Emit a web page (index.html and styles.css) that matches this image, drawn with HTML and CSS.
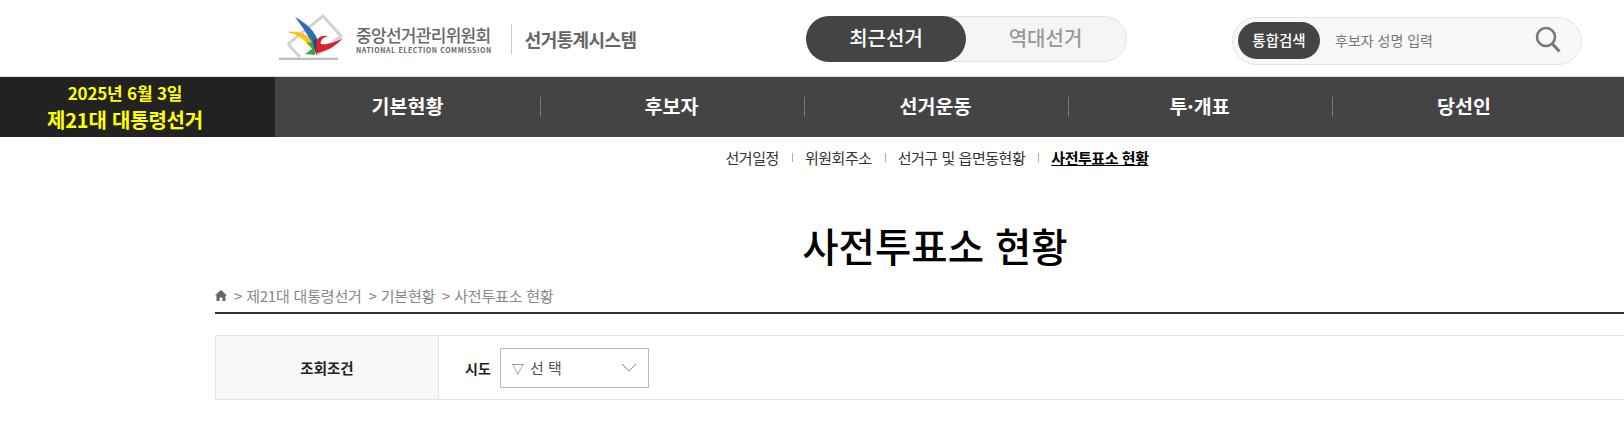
FILE: index.html
```html
<!DOCTYPE html>
<html lang="ko">
<head>
    <meta charset="UTF-8">
    <meta name="viewport" content="width=device-width, initial-scale=1.0">
    <title>사전투표소 현황</title>
    <link rel="stylesheet" href="styles.css">
</head>
<body>
    <header class="top">
        <div class="logo">
            <svg class="logo-mark" width="64" height="46" viewBox="0 0 64 46">
                <path d="M9 30 L44 2 L62 22 L38 41" fill="none" stroke="#d2d2d2" stroke-width="3"/>
                <path d="M9 30 L21 43" fill="none" stroke="#d2d2d2" stroke-width="3"/>
                <path d="M0 45 H59" stroke="#bdbdbd" stroke-width="2.5"/>
                <path d="M16 3 C27 9 36 17 39 27 L33 31 C29 20 22 11 16 3Z" fill="#2a6fb4"/>
                <path d="M8 18 C19 16 29 20 33 28 L30 33 C26 25 17 20 8 18Z" fill="#f6c51c"/>
                <path d="M28 28 L34 29 L37 36 L36 41 L26 40 L33 35Z" fill="#3ba648"/>
                <path d="M34 27 C35 36 38 39 37 41 L40 37 C42 32 40 27 37 25Z" fill="#243f8c"/>
                <path d="M37 39 C47 38 57 32 64 24 C55 29 47 31 42 30 C41 27 43 24 49 22 C42 21 37 24 37 30Z" fill="#d8232e"/>
            </svg>
            <div class="logo-name">
                <strong>중앙선거관리위원회</strong>
                <span>NATIONAL ELECTION COMMISSION</span>
            </div>
            <div class="logo-system">선거통계시스템</div>
        </div>
        <div class="toggle">
            <a class="toggle-item on">최근선거</a>
            <a class="toggle-item">역대선거</a>
        </div>
        <div class="search">
            <span class="search-btn">통합검색</span>
            <span class="search-hint">후보자 성명 입력</span>
            <svg class="search-icon" width="26" height="28" viewBox="0 0 26 28">
                <circle cx="11" cy="11" r="9" fill="none" stroke="#777" stroke-width="2.6"/>
                <path d="M17.5 18 L24.5 25.5" stroke="#777" stroke-width="3"/>
            </svg>
        </div>
    </header>

    <nav class="gnb">
        <div class="election">
            <div class="election-date">2025년 6월 3일</div>
            <div class="election-name">제21대 대통령선거</div>
        </div>
        <ul class="gnb-list">
            <li>기본현황</li>
            <li>후보자</li>
            <li>선거운동</li>
            <li>투·개표</li>
            <li>당선인</li>
        </ul>
    </nav>

    <ul class="subnav">
        <li>선거일정</li>
        <li>위원회주소</li>
        <li>선거구 및 읍면동현황</li>
        <li class="current">사전투표소 현황</li>
    </ul>

    <main class="content">
        <h1 class="page-title">사전투표소 현황</h1>
        <div class="crumb">
            <svg width="12" height="11" viewBox="0 0 12 11">
                <path d="M6 0 L12 5.5 H10.5 V11 H7.5 V7.5 H4.5 V11 H1.5 V5.5 H0Z" fill="#666"/>
            </svg>
            <span>&gt; 제21대 대통령선거</span>
            <span>&gt; 기본현황</span>
            <span>&gt; 사전투표소 현황</span>
        </div>
        <div class="filter">
            <div class="filter-head">조회조건</div>
            <div class="filter-body">
                <label class="filter-label">시도</label>
                <div class="select">
                    <span><i class="select-mark">▽</i> 선 택</span>
                    <svg width="16" height="9" viewBox="0 0 16 9">
                        <path d="M1 1 L8 8 L15 1" fill="none" stroke="#888" stroke-width="1"/>
                    </svg>
                </div>
            </div>
        </div>
    </main>
</body>
</html>
```

FILE: styles.css
```css
* {
    box-sizing: border-box;
}
html, body {
    overflow: hidden;
}
body {
    margin: 0;
    width: 1624px;
    height: 447px;
    background: #fff;
    color: #222;
    font-family: "Noto Sans CJK KR", "Noto Sans", sans-serif;
}
ul {
    list-style: none;
    margin: 0;
    padding: 0;
}

/* top */
.top {
    display: flex;
    align-items: flex-start;
    height: 77px;
    padding-left: 279px;
    border-bottom: 1px solid #ddd;
}
.logo {
    display: flex;
    align-items: center;
    width: 527px;
    height: 50px;
    margin-top: 12px;
}
.logo-mark {
    flex: none;
}
.logo-name {
    display: flex;
    flex-direction: column;
    margin: 3px 0 0 13px;
    color: #666;
}
.logo-name strong {
    font-size: 17px;
    font-weight: 500;
    line-height: 23px;
    letter-spacing: -0.7px;
}
.logo-name span {
    font-size: 7px;
    font-weight: 700;
    line-height: 9px;
    letter-spacing: 0.6px;
    white-space: nowrap;
}
.logo-system {
    height: 30px;
    margin: 3px 0 0 19px;
    padding-left: 13px;
    border-left: 1px solid #ccc;
    color: #666;
    font-size: 18px;
    font-weight: 700;
    line-height: 30px;
    letter-spacing: -0.6px;
}
.toggle {
    display: flex;
    width: 321px;
    height: 46px;
    margin-top: 16px;
    background: #f5f5f5;
    border: 1px solid #e2e2e2;
    border-radius: 23px;
}
.toggle-item {
    width: 160px;
    margin: -1px;
    color: #999;
    font-size: 20px;
    font-weight: 500;
    line-height: 44px;
    text-align: center;
}
.toggle-item.on {
    background: #444;
    color: #fff;
    border-radius: 23px;
}
.toggle-item + .toggle-item {
    padding-left: 3px;
}
.search {
    display: flex;
    align-items: center;
    width: 350px;
    height: 48px;
    margin: 17px 0 0 105px;
    padding: 0 20px 2px 5px;
    background: #f8f8f8;
    border: 1px solid #e4e4e4;
    border-radius: 24px;
}
.search-btn {
    width: 82px;
    height: 37px;
    background: #444;
    color: #fff;
    border-radius: 19px;
    font-size: 14.5px;
    font-weight: 500;
    line-height: 36px;
    text-align: center;
}
.search-hint {
    flex: 1;
    margin-left: 15px;
    color: #777;
    font-size: 14px;
}

/* main menu */
.gnb {
    display: flex;
    height: 60px;
    background: #444;
}
.election {
    width: 275px;
    padding-right: 25px;
    background: #222;
    color: #ff0;
    font-weight: 700;
    text-align: center;
}
.election-date {
    margin-top: 3px;
    font-size: 17px;
    line-height: 26px;
    letter-spacing: -0.2px;
}
.election-name {
    font-size: 20px;
    line-height: 27px;
    letter-spacing: -0.2px;
}
.gnb-list {
    display: flex;
    align-items: center;
    margin-left: 2px;
}
.gnb-list li {
    width: 264px;
    height: 20px;
    padding-right: 2px;
    border-right: 1px solid #777;
    color: #fff;
    font-size: 19.5px;
    font-weight: 700;
    line-height: 18px;
    text-align: center;
}
.gnb-list li:last-child {
    border-right: 0;
}

/* sub menu */
.subnav {
    display: flex;
    justify-content: center;
    align-items: center;
    height: 40px;
    padding-left: 250px;
    color: #333;
    font-size: 15px;
    letter-spacing: -0.45px;
}
.subnav li + li {
    margin-left: 13px;
    padding-left: 13px;
    background: linear-gradient(#aaa, #aaa) left 54% / 1px 9px no-repeat;
}
.subnav .current {
    color: #000;
    font-weight: 700;
    text-decoration: underline;
}

/* content */
.content {
    width: 1440px;
    margin-left: 215px;
}
.page-title {
    margin: 37px 0 0;
    color: #000;
    font-size: 39.5px;
    font-weight: 500;
    line-height: 62px;
    text-align: center;
}
.crumb {
    display: flex;
    align-items: center;
    gap: 7px;
    height: 32px;
    margin-top: 6px;
    padding-bottom: 3px;
    border-bottom: 2px solid #333;
    color: #888;
    font-size: 15px;
    letter-spacing: -0.2px;
}
.filter {
    display: flex;
    height: 65px;
    margin-top: 21px;
    border: 1px solid #e5e5e5;
}
.filter-head {
    width: 223px;
    background: #f8f8f8;
    border-right: 1px solid #e5e5e5;
    color: #222;
    font-size: 14.5px;
    font-weight: 700;
    line-height: 64px;
    text-align: center;
}
.filter-body {
    display: flex;
    align-items: center;
    padding-left: 26px;
}
.filter-label {
    margin-right: 9px;
    font-size: 14px;
    font-weight: 700;
}
.select {
    display: flex;
    justify-content: space-between;
    align-items: center;
    width: 149px;
    height: 40px;
    padding: 0 11px 0 11px;
    border: 1px solid #bbb;
    color: #555;
    font-size: 15px;
}
.select-mark {
    margin-right: 2px;
    font-size: 12px;
    font-style: normal;
}
```
